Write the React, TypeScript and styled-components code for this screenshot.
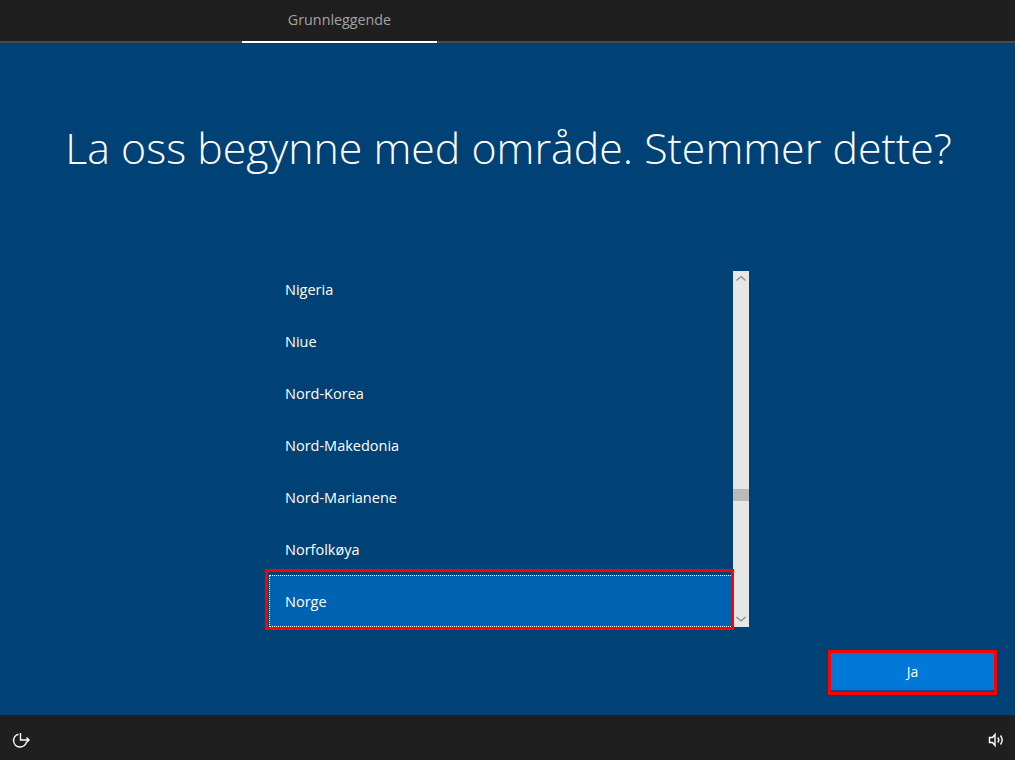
import React from "react";
import styled, { createGlobalStyle } from "styled-components";

const Global = createGlobalStyle`
  html, body { margin: 0; padding: 0; height: 100%; overflow: hidden; background: #004275; }
  #root { height: 100%; }
  * { box-sizing: border-box; }
`;
const Page = styled.div`
  width: 1015px; height: 760px; display: flex; flex-direction: column;
  background: #004275; color: #fff;
  font-family: "Open Sans", "Noto Sans", "Liberation Sans", sans-serif;
`;
const TopBar = styled.header`
  height: 43px; flex: none; background: #1f1f1f; border-bottom: 2px solid #4a4a4a;
  padding-left: 242px; display: flex;
`;
const Tab = styled.div`
  width: 195px; height: 43px; border-bottom: 2px solid #fff;
  font-size: 14.3px; color: #a3a3a3; text-align: center; line-height: 40px;
`;
const Main = styled.main`
  flex: 1; display: flex; flex-direction: column; align-items: center; min-height: 0;
`;
const Title = styled.h1`
  margin: 75px 0 0 2px; height: 60px; font-size: 42.85px; font-weight: 300; line-height: 60px;
  white-space: nowrap; color: #fff;
`;
const ListFrame = styled.div`
  position: relative; margin: 93px 0 0 3px; width: 480px; height: 356px; display: flex;
`;
const List = styled.ul`
  flex: 1; list-style: none; margin: 0; padding: 0; overflow: hidden; min-width: 0;
`;
const Scroller = styled.div`
  margin-top: -8px;
`;
const Row = styled.li<{ $selected?: boolean }>`
  height: 52px; padding-left: 16px; line-height: 54px; font-size: 14.5px; color: #fff;
  background: ${(p) => (p.$selected ? "#0063b1" : "transparent")};
  ${(p) => p.$selected && "outline: 1px dotted #fff; outline-offset: -1px;"}
`;
const ScrollBar = styled.div`
  width: 16px; flex: none; background: #e6e6e6; display: flex; flex-direction: column;
  justify-content: space-between; position: relative;
`;
const ScrollArrow = styled.svg`
  display: block; width: 16px; height: 16px; color: #8a8a8a; fill: none; stroke: currentColor; stroke-width: 1.2;
`;
const Thumb = styled.div`
  position: absolute; top: 218px; left: 0; width: 16px; height: 12px; background: #bababa;
`;
const RowMark = styled.div`
  position: absolute; left: -4px; top: 298px; width: 469px; height: 61px;
  border: 3px solid #f00; pointer-events: none;
`;
const ActionRow = styled.div`
  width: 100%; display: flex; justify-content: flex-end; padding: 23px 18px 0 0;
`;
const NextButton = styled.button`
  width: 169px; height: 45px; border: 3px solid #f00; padding: 0 0 2px; background: #0078d7;
  color: #fff; font: inherit; font-size: 14px; box-shadow: inset 0 -2px 0 #004e8c;
`;
const BottomBar = styled.footer`
  height: 45px; flex: none; background: #1f1f1f; display: flex; align-items: center;
  justify-content: space-between; padding: 5px 10px 0 12px;
`;
const Icon = styled.svg`
  display: block; width: 18px; height: 18px; color: #fff; fill: none; stroke: currentColor; stroke-width: 1.4;
`;

const items = ["Nigeria", "Niue", "Nord-Korea", "Nord-Makedonia", "Nord-Marianene", "Norfolkøya"];

export default function App() {
  return (
    <Page>
      <Global />
      <TopBar><Tab>Grunnleggende</Tab></TopBar>
      <Main>
        <Title>La oss begynne med område. Stemmer dette?</Title>
        <ListFrame>
          <List>
            <Scroller>
              {items.map((i) => <Row key={i}>{i}</Row>)}
              <Row $selected>Norge</Row>
            </Scroller>
          </List>
          <ScrollBar>
            <ScrollArrow viewBox="0 0 16 16"><path d="M3.500 9.500 8 5.500l4.500 4" /></ScrollArrow>
            <Thumb />
            <ScrollArrow viewBox="0 0 16 16"><path d="M3.500 6 8 10l4.500-4" /></ScrollArrow>
          </ScrollBar>
          <RowMark />
        </ListFrame>
        <ActionRow><NextButton>Ja</NextButton></ActionRow>
      </Main>
      <BottomBar>
        <Icon viewBox="0 0 18 18">
          <path d="M6.500 3.200A6.500 6.500 0 1 0 14.400 11" />
          <path d="M8.500 2V9H17M14.500 6.500 17 9l-2.500 2.500" />
        </Icon>
        <Icon viewBox="0 0 18 18">
          <path d="M2.500 6.500H5.500L8 3.500V14.500L5.500 11.500H2.500Z" />
          <path d="M10.800 6.500a4 4 0 0 1 0 5M13.500 4.500a7.500 7.500 0 0 1 0 9" />
        </Icon>
      </BottomBar>
    </Page>
  );
}
